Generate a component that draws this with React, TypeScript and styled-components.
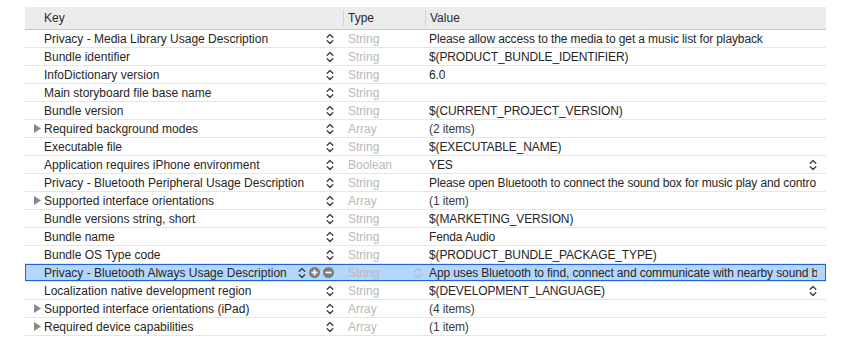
import React from "react";
import styled, { createGlobalStyle } from "styled-components";

interface Entry {
  key: string;
  type: string;
  value: string;
  expandable?: boolean;
  valueStepper?: boolean;
  selected?: boolean;
}

const rows: Entry[] = [
  { key: "Privacy - Media Library Usage Description", type: "String", value: "Please allow access to the media to get a music list for playback" },
  { key: "Bundle identifier", type: "String", value: "$(PRODUCT_BUNDLE_IDENTIFIER)" },
  { key: "InfoDictionary version", type: "String", value: "6.0" },
  { key: "Main storyboard file base name", type: "String", value: "" },
  { key: "Bundle version", type: "String", value: "$(CURRENT_PROJECT_VERSION)" },
  { key: "Required background modes", type: "Array", value: "(2 items)", expandable: true },
  { key: "Executable file", type: "String", value: "$(EXECUTABLE_NAME)" },
  { key: "Application requires iPhone environment", type: "Boolean", value: "YES", valueStepper: true },
  { key: "Privacy - Bluetooth Peripheral Usage Description", type: "String", value: "Please open Bluetooth to connect the sound box for music play and contro" },
  { key: "Supported interface orientations", type: "Array", value: "(1 item)", expandable: true },
  { key: "Bundle versions string, short", type: "String", value: "$(MARKETING_VERSION)" },
  { key: "Bundle name", type: "String", value: "Fenda Audio" },
  { key: "Bundle OS Type code", type: "String", value: "$(PRODUCT_BUNDLE_PACKAGE_TYPE)" },
  { key: "Privacy - Bluetooth Always Usage Description", type: "String", value: "App uses Bluetooth to find, connect and communicate with nearby sound b", selected: true },
  { key: "Localization native development region", type: "String", value: "$(DEVELOPMENT_LANGUAGE)", valueStepper: true },
  { key: "Supported interface orientations (iPad)", type: "Array", value: "(4 items)", expandable: true },
  { key: "Required device capabilities", type: "Array", value: "(1 item)", expandable: true },
];

const GlobalStyle = createGlobalStyle`
  body {
    margin: 0;
    background: #ffffff;
    font-family: "Liberation Sans", Arial, sans-serif;
    font-size: 12px;
    color: #262626;
  }
`;

const Page = styled.div`
  padding: 7px 26px 0 25px;
`;

const Table = styled.div`
  width: 801px;
`;

const HeaderRow = styled.div`
  display: grid;
  grid-template-columns: 318px 82px 1fr;
  height: 22px;
  background: #ececec;
  border-bottom: 1px solid #c9c9c9;
`;

const HeaderCell = styled.div<{ $divider?: boolean }>`
  display: flex;
  align-items: center;
  padding-left: ${(p) => (p.$divider ? "4px" : "19px")};
  color: #2b2b2b;
  border-left: ${(p) => (p.$divider ? "1px solid #d4d4d4" : "none")};
  margin: ${(p) => (p.$divider ? "3px 0" : "0")};
`;

const Row = styled.div<{ $selected?: boolean }>`
  display: grid;
  grid-template-columns: 318px 82px 1fr;
  height: 17px;
  border-bottom: 1px solid #e6e6e6;
  background: ${(p) => (p.$selected ? "#b5d6fc" : "transparent")};
  box-shadow: ${(p) => (p.$selected ? "inset 0 0 0 1px #1c64d8" : "none")};
  white-space: nowrap;
  overflow: hidden;
`;

const KeyCell = styled.div`
  display: flex;
  align-items: center;
  padding-left: 9px;
  padding-right: 9px;
  overflow: hidden;
`;

const Disclosure = styled.span<{ $visible?: boolean }>`
  width: 10px;
  flex: none;
  display: flex;
  align-items: center;
  visibility: ${(p) => (p.$visible ? "visible" : "hidden")};
`;

const KeyText = styled.span`
  flex: 1;
  overflow: hidden;
`;

const Controls = styled.span`
  display: flex;
  align-items: center;
  gap: 3px;
  flex: none;
`;

const TypeCell = styled.div`
  display: flex;
  align-items: center;
  justify-content: space-between;
  padding: 0 3px 0 5px;
  color: #b9b9b9;
`;

const ValueCell = styled.div<{ $muted?: boolean }>`
  display: flex;
  align-items: center;
  justify-content: space-between;
  padding: 0 9px 0 4px;
  overflow: hidden;
  letter-spacing: -0.12px;
  color: ${(p) => (p.$muted ? "#3a3a3a" : "#262626")};
`;

const ValueText = styled.span`
  overflow: hidden;
`;

const Stepper = ({ color = "#3a3a3a" }: { color?: string }) => (
  <svg width="8" height="12" viewBox="0 0 8 12">
    <polyline points="1.2,4.2 4,1.5 6.8,4.2" fill="none" stroke={color} strokeWidth="1.3" strokeLinecap="round" strokeLinejoin="round" />
    <polyline points="1.2,7.8 4,10.5 6.8,7.8" fill="none" stroke={color} strokeWidth="1.3" strokeLinecap="round" strokeLinejoin="round" />
  </svg>
);

const Triangle = () => (
  <svg width="7" height="9" viewBox="0 0 7 9">
    <polygon points="0,0 7,4.5 0,9" fill="#8a8a8a" />
  </svg>
);

const CircleButton = ({ minus }: { minus?: boolean }) => (
  <svg width="11" height="11" viewBox="0 0 11 11">
    <circle cx="5.5" cy="5.5" r="5.5" fill="#7b7b7b" />
    <rect x="2.5" y="4.6" width="6" height="1.8" fill="#ffffff" />
    {!minus && <rect x="4.6" y="2.5" width="1.8" height="6" fill="#ffffff" />}
  </svg>
);

const App = (): JSX.Element => {
  return (
    <Page>
      <GlobalStyle />
      <Table>
        <HeaderRow>
          <HeaderCell>Key</HeaderCell>
          <HeaderCell $divider>Type</HeaderCell>
          <HeaderCell $divider>Value</HeaderCell>
        </HeaderRow>
        {rows.map((r, i) => (
          <Row key={i} $selected={r.selected}>
            <KeyCell>
              <Disclosure $visible={r.expandable}>
                <Triangle />
              </Disclosure>
              <KeyText>{r.key}</KeyText>
              <Controls>
                <Stepper />
                {r.selected && <CircleButton />}
                {r.selected && <CircleButton minus />}
              </Controls>
            </KeyCell>
            <TypeCell>
              <span>{r.type}</span>
              {r.selected && <Stepper color="#a9bcd3" />}
            </TypeCell>
            <ValueCell $muted={r.type === "Array"}>
              <ValueText>{r.value}</ValueText>
              {r.valueStepper && <Stepper />}
            </ValueCell>
          </Row>
        ))}
      </Table>
    </Page>
  );
};

export default App;
